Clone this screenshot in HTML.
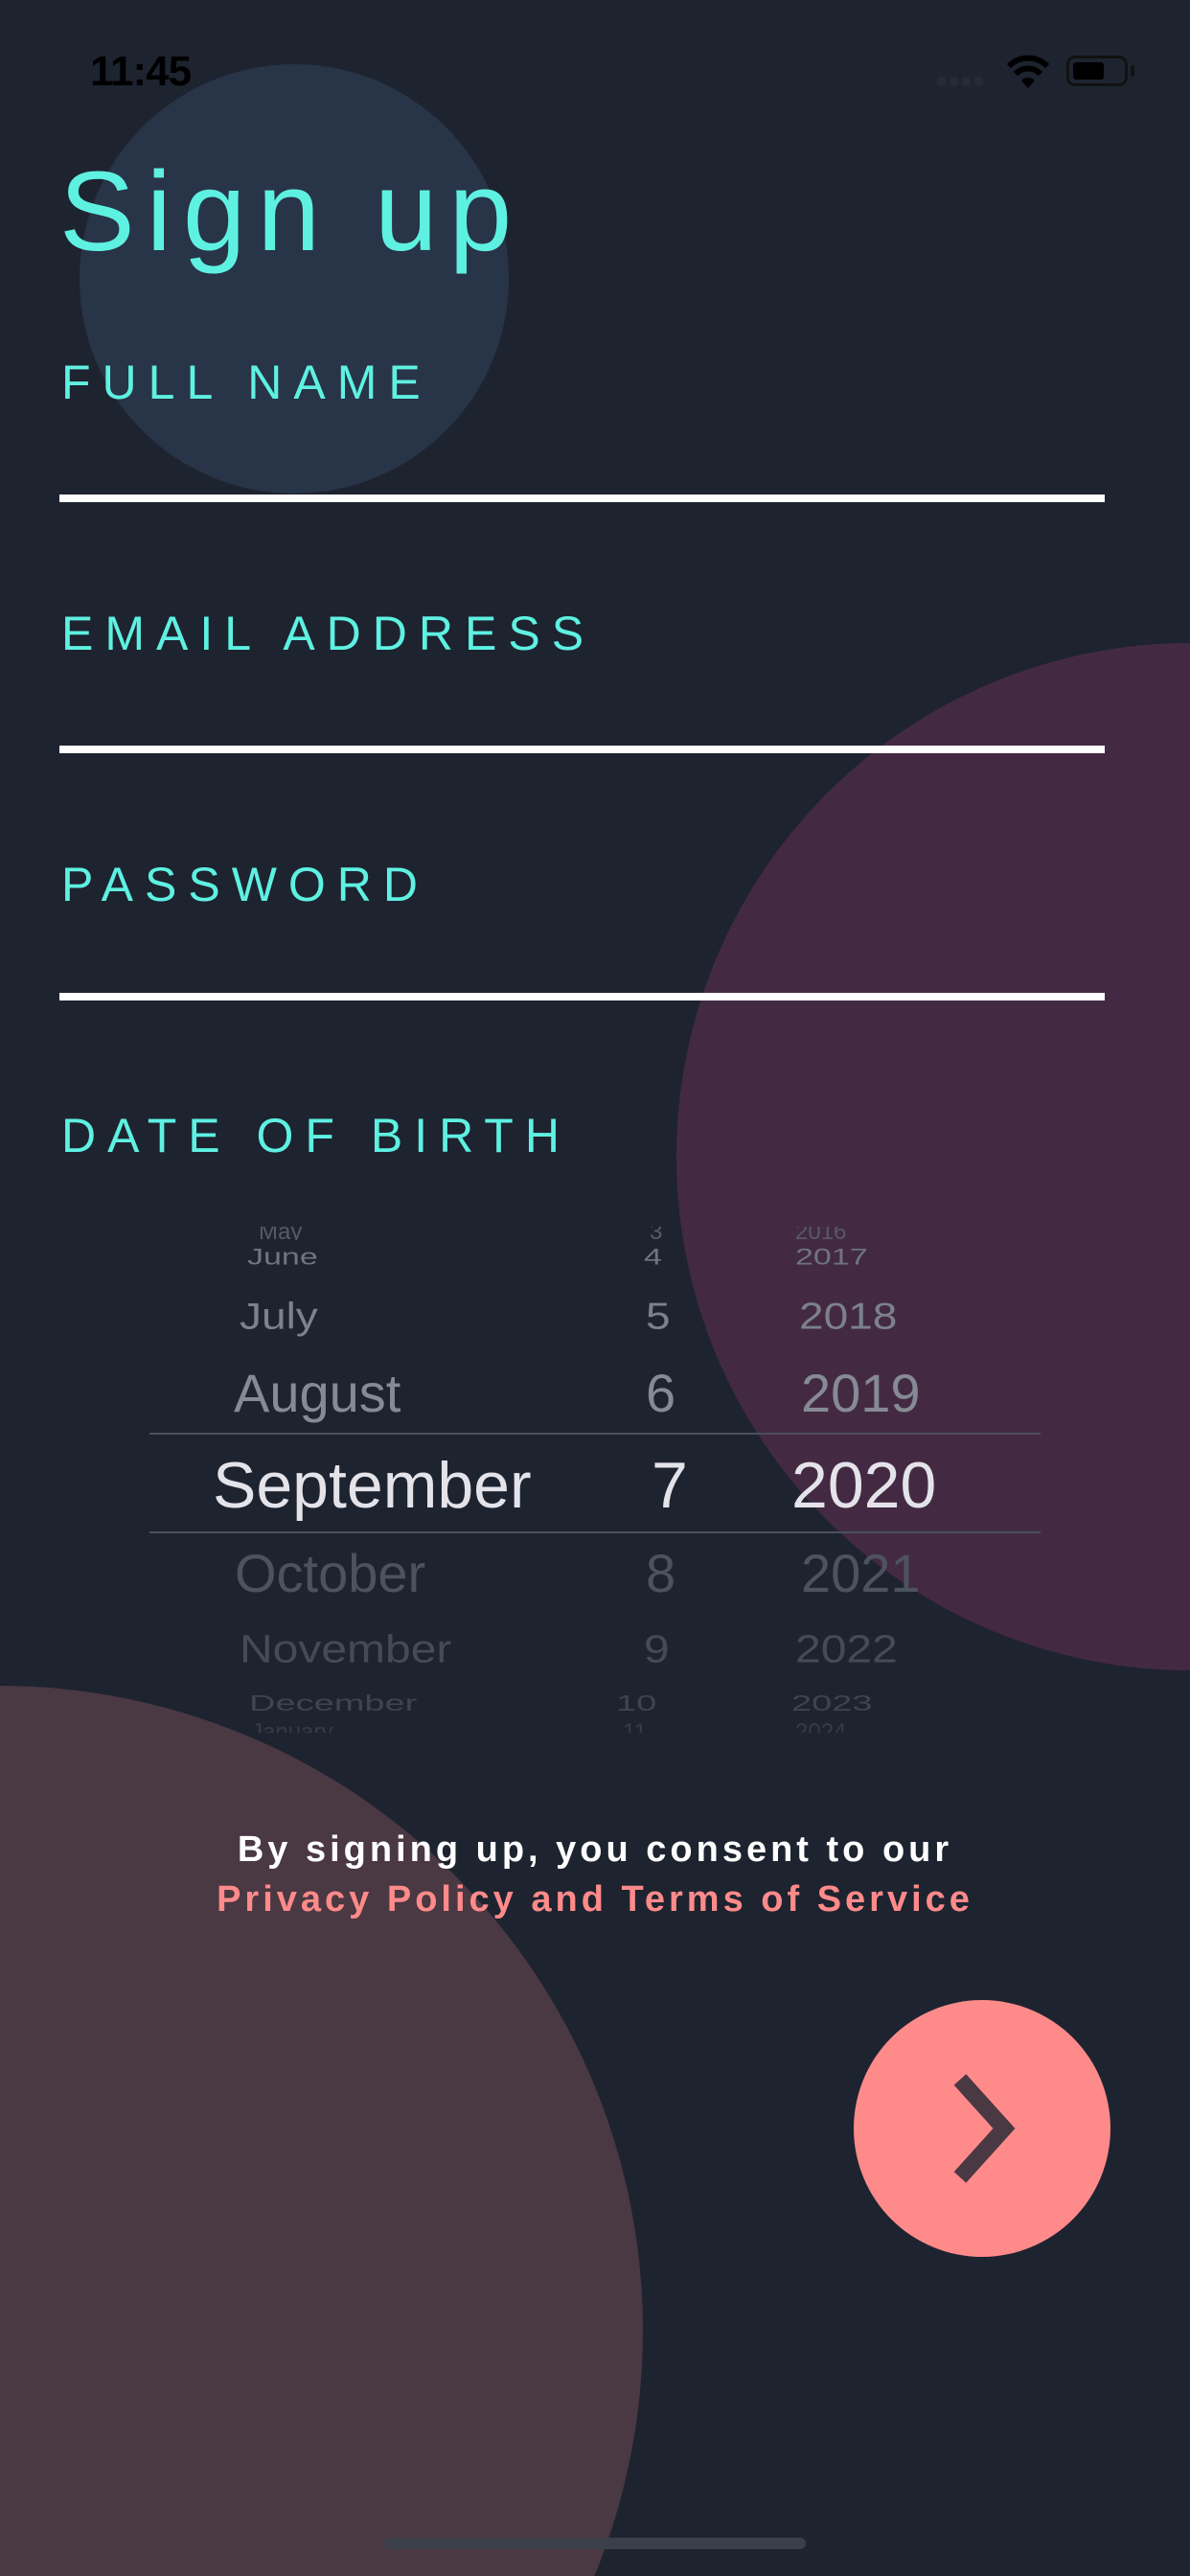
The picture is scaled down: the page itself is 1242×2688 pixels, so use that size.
<!DOCTYPE html>
<html style="overflow:hidden;height:2688px"><head><meta charset="utf-8"><style>
html,body{margin:0;padding:0}
body{width:1242px;height:2688px;background:#1e2330;overflow:hidden;font-family:"Liberation Sans",sans-serif}
#w{position:relative;width:1242px;height:2688px;overflow:hidden;background:#1e2330}
.c{position:absolute;border-radius:50%}
.lbl{position:absolute;left:64px;color:#5ef1e2;font-size:50px;letter-spacing:12px;font-weight:300}
.line{position:absolute;left:62px;width:1091px;height:8px;background:#fff}
.row{position:absolute;left:0;width:1242px;height:0}
.row span{position:absolute;white-space:nowrap}
.sel{position:absolute;left:156px;width:930px;height:2px;background:#4a505c}
</style></head><body><div id="w">
<svg style="position:absolute;left:0;top:0" width="1242" height="2688" viewBox="0 0 1242 2688">
<circle cx="307" cy="291" r="224" fill="#283447"/>
<circle cx="1242" cy="1207" r="536" fill="#432a42"/>
<circle cx="-2" cy="2432" r="673" fill="#4a3843"/>
</svg>

<div style="position:absolute;left:94px;top:50px;font-size:44px;font-weight:bold;color:#000;letter-spacing:-1px">11:45</div>
<div style="position:absolute;left:978px;top:80px;width:48px;height:10px;display:flex;gap:4px"><i style="width:9px;height:10px;background:#262a33;border-radius:3px"></i><i style="width:9px;height:10px;background:#262a33;border-radius:3px"></i><i style="width:9px;height:10px;background:#262a33;border-radius:3px"></i><i style="width:9px;height:10px;background:#262a33;border-radius:3px"></i></div>
<svg style="position:absolute;left:1050px;top:55px" width="46" height="40" viewBox="0 0 46 40"><path d="M3 14 A28 28 0 0 1 43 14" stroke="#000" stroke-width="6" fill="none"/><path d="M10 22 A18 18 0 0 1 36 22" stroke="#000" stroke-width="6" fill="none"/><path d="M16 29 L23 37 L30 29 A10 10 0 0 0 16 29Z" fill="#000"/></svg>
<div style="position:absolute;left:1113px;top:58px;width:64px;height:32px;border:3px solid #111;border-radius:9px;box-sizing:border-box"><div style="position:absolute;left:4px;top:4px;width:32px;height:18px;background:#000;border-radius:3px"></div></div>
<div style="position:absolute;left:1180px;top:68px;width:4px;height:12px;background:#111;border-radius:2px"></div>

<div style="position:absolute;left:62px;top:162px;font-size:118px;color:#5ef1e2;letter-spacing:12px;font-weight:300;line-height:1">Sign up</div>

<div class="lbl" style="top:370px">FULL NAME</div>
<div class="line" style="top:516px"></div>
<div class="lbl" style="top:632px">EMAIL ADDRESS</div>
<div class="line" style="top:778px"></div>
<div class="lbl" style="top:894px">PASSWORD</div>
<div class="line" style="top:1036px"></div>
<div class="lbl" style="top:1156px">DATE OF BIRTH</div>

<div style="position:absolute;left:0;top:1280px;width:1242px;height:14px;overflow:hidden;color:#555a66;font-size:24px">
<span style="position:absolute;left:270px;top:-8px">May</span><span style="position:absolute;left:678px;top:-8px">3</span><span style="position:absolute;left:830px;top:-8px">2016</span></div>
<div class="row" style="top:1326px;color:#6f7480;font-size:34px"><span style="left:258px;bottom:0;transform:scaleY(.7);transform-origin:bottom">June</span><span style="left:672px;bottom:0;transform:scaleY(.7);transform-origin:bottom">4</span><span style="left:830px;bottom:0;transform:scaleY(.7);transform-origin:bottom">2017</span></div>
<div class="row" style="top:1390px;color:#7c818c;font-size:46px"><span style="left:250px;bottom:-10px;transform:scaleY(.85)">July</span><span style="left:674px;bottom:-10px;transform:scaleY(.85)">5</span><span style="left:834px;bottom:-10px;transform:scaleY(.85)">2018</span></div>
<div class="row" style="top:1474px;color:#868a94;font-size:56px"><span style="left:244px;bottom:-12px">August</span><span style="left:674px;bottom:-12px">6</span><span style="left:836px;bottom:-12px">2019</span></div>
<div class="sel" style="top:1495px"></div>
<div class="row" style="top:1574px;color:#e4e3ea;font-size:68px"><span style="left:222px;bottom:-15px">September</span><span style="left:680px;bottom:-15px">7</span><span style="left:826px;bottom:-15px">2020</span></div>
<div class="sel" style="top:1598px"></div>
<div class="row" style="top:1662px;color:#4d535e;font-size:56px"><span style="left:245px;bottom:-12px">October</span><span style="left:674px;bottom:-12px">8</span><span style="left:836px;bottom:-12px">2021</span></div>
<div class="row" style="top:1739px;color:#454b56;font-size:48px"><span style="left:250px;bottom:-10px;transform:scaleY(.85)">November</span><span style="left:672px;bottom:-10px;transform:scaleY(.85)">9</span><span style="left:830px;bottom:-10px;transform:scaleY(.85)">2022</span></div>
<div class="row" style="top:1789px;color:#3e4450;font-size:38px"><span style="left:260px;bottom:-2px;transform:scaleY(.6);transform-origin:bottom">December</span><span style="left:643px;bottom:-2px;transform:scaleY(.6);transform-origin:bottom">10</span><span style="left:826px;bottom:-2px;transform:scaleY(.6);transform-origin:bottom">2023</span></div>
<div style="position:absolute;left:0;top:1796px;width:1242px;height:12px;overflow:hidden;color:#353b47;font-size:24px">
<span style="position:absolute;left:262px;top:-2px">January</span><span style="position:absolute;left:650px;top:-2px">11</span><span style="position:absolute;left:830px;top:-2px">2024</span></div>

<div style="position:absolute;left:0;width:1242px;top:1904px;text-align:center;font-size:38px;font-weight:bold;color:#fff;letter-spacing:4px;line-height:52px">By signing up, you consent to our<br><span style="color:#ff8a8a">Privacy Policy and Terms of Service</span></div>

<div class="c" style="left:891px;top:2087px;width:268px;height:268px;background:#ff8a8a"></div>
<svg style="position:absolute;left:980px;top:2160px" width="100" height="124" viewBox="0 0 100 124"><path d="M22 10 L68 61 L22 112" stroke="#4a3843" stroke-width="17" fill="none" stroke-linejoin="miter"/></svg>

<div style="position:absolute;left:401px;top:2648px;width:440px;height:12px;border-radius:6px;background:#3a3f49"></div>
</div></body></html>
